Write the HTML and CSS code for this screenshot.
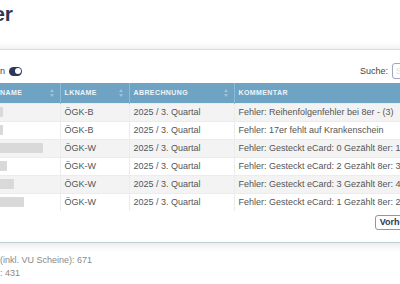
FILE: index.html
```html
<!DOCTYPE html>
<html lang="de">
<head>
  <meta charset="UTF-8" />
  <meta name="viewport" content="width=device-width, initial-scale=1.0"/>
  <title>Fehler</title>
  <link rel="stylesheet" href="styles.css">
</head>
<body>

  <h1 class="title">Fehler</h1>

  <section class="card">
    <!-- Filter row -->
    <div class="toolbar">
      <label class="switch-label">n <span class="switch"><span></span></span></label>
      <label class="search">Suche: <span class="search-input">S</span></label>
    </div>

    <table class="grid">
      <thead>
        <tr>
          <th class="c-name">NAME <i class="sort"></i></th>
          <th class="c-lk">LKNAME <i class="sort"></i></th>
          <th class="c-abr">ABRECHNUNG <i class="sort"></i></th>
          <th class="c-kom">KOMMENTAR</th>
        </tr>
      </thead>
      <tbody>
        <tr>
          <td><span class="redact w1"></span></td>
          <td>ÖGK-B</td>
          <td>2025 / 3. Quartal</td>
          <td>Fehler: Reihenfolgenfehler bei 8er - (3)</td>
        </tr>
        <tr>
          <td><span class="redact w2"></span></td>
          <td>ÖGK-B</td>
          <td>2025 / 3. Quartal</td>
          <td>Fehler: 17er fehlt auf Krankenschein</td>
        </tr>
        <tr>
          <td><span class="redact w3"></span></td>
          <td>ÖGK-W</td>
          <td>2025 / 3. Quartal</td>
          <td>Fehler: Gesteckt eCard: 0 Gezählt 8er: 1</td>
        </tr>
        <tr>
          <td><span class="redact w4"></span></td>
          <td>ÖGK-W</td>
          <td>2025 / 3. Quartal</td>
          <td>Fehler: Gesteckt eCard: 2 Gezählt 8er: 3</td>
        </tr>
        <tr>
          <td><span class="redact w5"></span></td>
          <td>ÖGK-W</td>
          <td>2025 / 3. Quartal</td>
          <td>Fehler: Gesteckt eCard: 3 Gezählt 8er: 4</td>
        </tr>
        <tr>
          <td><span class="redact w6"></span></td>
          <td>ÖGK-W</td>
          <td>2025 / 3. Quartal</td>
          <td>Fehler: Gesteckt eCard: 1 Gezählt 8er: 2</td>
        </tr>
      </tbody>
    </table>

    <div class="pager">
      <button class="btn">Vorherige</button>
    </div>
  </section>

  <div class="summary">
    <p>(inkl. VU Scheine): 671</p>
    <p>: 431</p>
  </div>

</body>
</html>
```

FILE: styles.css
```css
:root {
  --navy: #2d3757;
  --head: #6ea3c4;
  --text: #555;
}
* { box-sizing: border-box; }
body {
  margin: 0;
  background: #fff;
  color: var(--text);
  font-family: 'Liberation Sans', Arial, sans-serif;
  font-size: 9px;
  overflow: hidden;
}

.title {
  margin: 0 0 0 -50px;
  height: 49px;
  padding-top: 2px;
  font-size: 21px;
  line-height: 24px;
  font-weight: 700;
  color: var(--navy);
}

/* Card */
.card {
  margin-left: -10px;
  width: 440px;
  background: #fff;
  border-top: 1px solid #d3dee5;
  border-bottom: 1px solid #b7d0d4;
  box-shadow: 0 1px 10px rgba(0,0,0,0.13);
  padding-bottom: 12px;
}

.toolbar {
  display: flex;
  justify-content: space-between;
  align-items: center;
  padding: 13px 8px 4px 10px;
  height: 33px;
}
.switch-label {
  display: flex;
  align-items: center;
  gap: 4px;
  color: #444;
}
.switch {
  display: inline-flex;
  justify-content: flex-end;
  align-items: center;
  width: 13px;
  height: 9px;
  padding: 0 1.5px;
  border-radius: 5px;
  background: var(--navy);
}
.switch span {
  width: 6px;
  height: 6px;
  border-radius: 50%;
  background: #fff;
}
.search {
  display: flex;
  align-items: center;
  gap: 4px;
  color: #444;
}
.search-input {
  width: 30px;
  height: 16px;
  border: 1px solid #a3a7c6;
  border-radius: 3px;
  padding: 2px 3px;
  color: #ddd;
  line-height: 10px;
}

/* Table */
.grid {
  width: 100%;
  border-collapse: collapse;
  table-layout: fixed;
}
.grid th {
  position: relative;
  height: 20px;
  padding: 0 4px;
  background: var(--head);
  color: #eef4f8;
  font-size: 7px;
  font-weight: 700;
  letter-spacing: 0.4px;
  text-align: left;
  border-left: 1px solid #8dbad4;
}
.grid th:first-child { border-left: none; padding-left: 10px; }
.c-name { width: 70px; }
.c-lk { width: 69px; }
.c-abr { width: 105px; }

.sort {
  position: absolute;
  right: 6px;
  top: 6px;
  width: 4px;
  height: 8px;
  opacity: 0.35;
}
.sort::before,
.sort::after {
  content: "";
  position: absolute;
  left: 0;
  border-left: 2px solid transparent;
  border-right: 2px solid transparent;
}
.sort::before { top: 0; border-bottom: 3px solid #fff; }
.sort::after { bottom: 0; border-top: 3px solid #fff; }

.grid td {
  height: 18px;
  padding: 0 4px;
  white-space: nowrap;
  overflow: hidden;
  border-top: 1px solid #ececec;
  border-left: 1px solid #ececec;
}
.grid td:first-child { border-left: none; padding-left: 0; }
.grid tbody tr:nth-child(odd) td { background: #f3f3f3; }
.grid tbody tr:nth-child(even) td { background: #fff; }

.redact {
  display: block;
  height: 10px;
  background: #d9d9d9;
  border-radius: 1px;
  filter: blur(0.6px);
}
.w1 { width: 13px; }
.w2 { width: 13px; }
.w3 { width: 53px; }
.w4 { width: 17px; }
.w5 { width: 24px; }
.w6 { width: 34px; }

/* Pager */
.pager {
  display: flex;
  justify-content: flex-end;
  padding: 4px 4px 0 0;
}
.btn {
  height: 15px;
  padding: 0 4px;
  border: 1px solid #8f93b5;
  border-radius: 3px;
  background: #fff;
  color: var(--navy);
  font-family: inherit;
  font-size: 9px;
  font-weight: 700;
  line-height: 13px;
}

.summary {
  margin-top: 11px;
  color: #888;
  line-height: 12.5px;
}
.summary p { margin: 0; }
```
